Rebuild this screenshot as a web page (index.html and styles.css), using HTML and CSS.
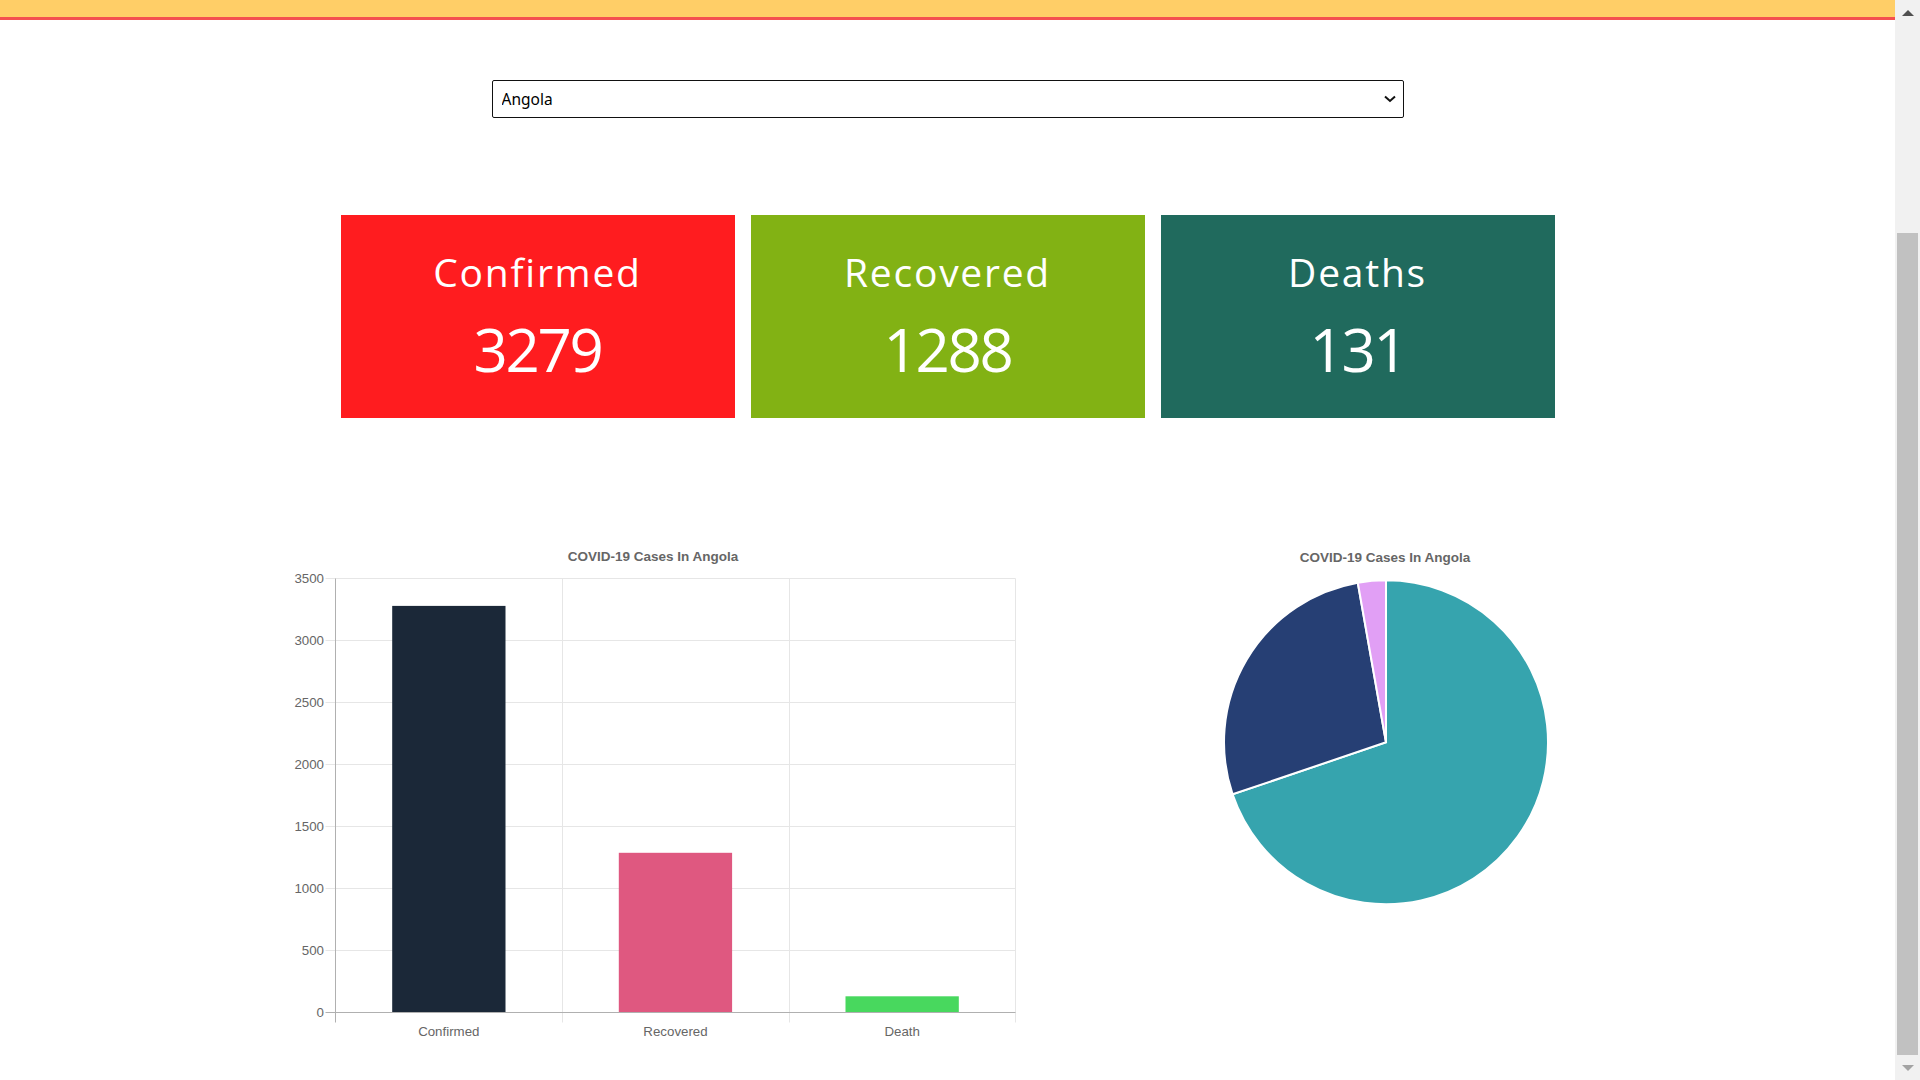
FILE: index.html
```html
<!DOCTYPE html>
<html lang="en">
<head>
<meta charset="utf-8">
<title>COVID-19 Tracker</title>
<link rel="stylesheet" href="styles.css">
</head>
<body>
<div class="page">
  <header class="topbar"></header>
  <main class="main">
    <div class="select-wrap">
      <select class="country-select">
        <option>Angola</option>
      </select>
      <svg class="chevron" width="12" height="8" viewBox="0 0 12 8"><path d="M1 1.5 L6 6 L11 1.5" fill="none" stroke="#111" stroke-width="2"/></svg>
    </div>

    <section class="cards">
      <div class="card card-confirmed">
        <div class="card-title">Confirmed</div>
        <div class="card-value">3279</div>
      </div>
      <div class="card card-recovered">
        <div class="card-title">Recovered</div>
        <div class="card-value">1288</div>
      </div>
      <div class="card card-deaths">
        <div class="card-title">Deaths</div>
        <div class="card-value">131</div>
      </div>
    </section>

    <section class="charts">
      <svg class="bar-chart" width="744" height="500" viewBox="0 0 744 500">
        <text class="chart-title" x="372" y="16" text-anchor="middle">COVID-19 Cases In Angola</text>
        <g class="grid">
          <line x1="44.5" x2="734.5" y1="33.5" y2="33.5"/>
          <line x1="44.5" x2="734.5" y1="95.5" y2="95.5"/>
          <line x1="44.5" x2="734.5" y1="157.5" y2="157.5"/>
          <line x1="44.5" x2="734.5" y1="219.5" y2="219.5"/>
          <line x1="44.5" x2="734.5" y1="281.5" y2="281.5"/>
          <line x1="44.5" x2="734.5" y1="343.5" y2="343.5"/>
          <line x1="44.5" x2="734.5" y1="405.5" y2="405.5"/>
          <line x1="281.5" x2="281.5" y1="33.5" y2="477.5"/>
          <line x1="508.5" x2="508.5" y1="33.5" y2="477.5"/>
          <line x1="734.5" x2="734.5" y1="33.5" y2="477.5"/>
        </g>
        <g class="bars">
          <rect x="111.2" y="60.9" width="113.3" height="406.6" fill="#1b2838"/>
          <rect x="337.8" y="307.8" width="113.3" height="159.7" fill="#df5880"/>
          <rect x="564.5" y="451.3" width="113.3" height="16.2" fill="#48d85e"/>
        </g>
        <g class="axis">
          <line x1="54.5" x2="54.5" y1="33.5" y2="477.5"/>
          <line x1="44.5" x2="734.5" y1="467.5" y2="467.5"/>
        </g>
        <g class="tick-label" text-anchor="end">
          <text x="43" y="38">3500</text>
          <text x="43" y="100">3000</text>
          <text x="43" y="162">2500</text>
          <text x="43" y="224">2000</text>
          <text x="43" y="286">1500</text>
          <text x="43" y="348">1000</text>
          <text x="43" y="410">500</text>
          <text x="43" y="472">0</text>
        </g>
        <g class="tick-label" text-anchor="middle">
          <text x="167.8" y="491">Confirmed</text>
          <text x="394.5" y="491">Recovered</text>
          <text x="621.2" y="491">Death</text>
        </g>
      </svg>

      <svg class="pie-chart" width="338" height="370" viewBox="0 0 338 370">
        <text class="chart-title" x="168" y="17" text-anchor="middle">COVID-19 Cases In Angola</text>
        <g class="slices">
          <path d="M169,197.3 L169,35.3 A162,162 0 1 1 15.59,249.32 Z" fill="#36a4ae"/>
          <path d="M169,197.3 L15.59,249.32 A162,162 0 0 1 140.79,37.78 Z" fill="#263f74"/>
          <path d="M169,197.3 L140.79,37.78 A162,162 0 0 1 169,35.3 Z" fill="#e19ff5"/>
        </g>
      </svg>
    </section>
  </main>
</div>
<div class="scrollbar" aria-hidden="true">
  <div class="sb-btn"><span class="sb-arrow-up"></span></div>
  <div class="sb-track"><div class="sb-thumb"></div></div>
  <div class="sb-btn"><span class="sb-arrow-down"></span></div>
</div>
</body>
</html>
```

FILE: styles.css
```css
html {
  background: #ffffff;
}

body {
  margin: 0;
  height: 100vh;
  overflow: hidden;
  display: flex;
  font-family: "Noto Sans", "Liberation Sans", sans-serif;
  background: #ffffff;
}

.page {
  flex: 1;
  min-width: 0;
}

/* scrollbar column */
.scrollbar {
  width: 25px;
  flex: none;
  display: flex;
  flex-direction: column;
  background: #f1f1f1;
}

.sb-btn {
  height: 25px;
  flex: none;
  display: flex;
  align-items: center;
  justify-content: center;
}

.sb-arrow-up {
  width: 0;
  height: 0;
  border-left: 6px solid transparent;
  border-right: 6px solid transparent;
  border-bottom: 6px solid #505050;
}

.sb-arrow-down {
  width: 0;
  height: 0;
  border-left: 6px solid transparent;
  border-right: 6px solid transparent;
  border-top: 6px solid #a3a3a3;
}

.sb-track {
  flex: 1;
  padding: 208px 2px 0;
}

.sb-thumb {
  height: 822px;
  background: #c1c1c1;
}

.topbar {
  height: 17px;
  background: #ffce67;
  border-bottom: 3px solid #f44f4f;
}

.main {
  width: 1214px;
  margin: 0 auto;
  padding: 60px 0 0;
}

.select-wrap {
  position: relative;
  width: 912px;
  height: 38px;
  margin: 0 auto;
}

.country-select {
  appearance: none;
  -webkit-appearance: none;
  display: block;
  width: 100%;
  height: 38px;
  box-sizing: border-box;
  margin: 0;
  padding: 0 30px 0 9px;
  border: 1px solid #111;
  border-radius: 2px;
  background: #fff;
  color: #000;
  font-family: "Noto Sans", "Liberation Sans", sans-serif;
  font-size: 15.5px;
  outline: none;
}

.chevron {
  position: absolute;
  right: 8px;
  top: 15px;
  pointer-events: none;
}

.cards {
  display: flex;
  gap: 16px;
  margin-top: 97px;
}

.card {
  flex: 1;
  height: 203px;
  box-sizing: border-box;
  padding-top: 33px;
  color: #ffffff;
  text-align: center;
  font-family: "Open Sans", "Noto Sans", sans-serif;
}

.card-confirmed {
  background: #ff1c1f;
}

.card-recovered {
  background: #82b214;
}

.card-deaths {
  background: #206a5d;
}

.card-title {
  font-size: 39px;
  line-height: 48px;
  font-weight: 400;
  letter-spacing: 1.75px;
}

.card-value {
  margin-top: 18px;
  font-size: 60px;
  line-height: 70px;
  font-weight: 400;
  letter-spacing: -2.25px;
}

.charts {
  display: flex;
  justify-content: space-between;
  align-items: flex-start;
  margin-top: 127px;
  margin-left: -60px;
}

.bar-chart,
.pie-chart {
  display: block;
}

.chart-title {
  font-family: "Liberation Sans", Arial, sans-serif;
  font-size: 13.5px;
  font-weight: 700;
  fill: #666666;
}

.tick-label {
  font-family: "Liberation Sans", Arial, sans-serif;
  font-size: 13.3px;
  fill: #666666;
}

.grid line {
  stroke: #e6e6e6;
  stroke-width: 1;
}

.axis line {
  stroke: #b0b0b0;
  stroke-width: 1;
}

.slices path {
  stroke: #ffffff;
  stroke-width: 2;
}
```
